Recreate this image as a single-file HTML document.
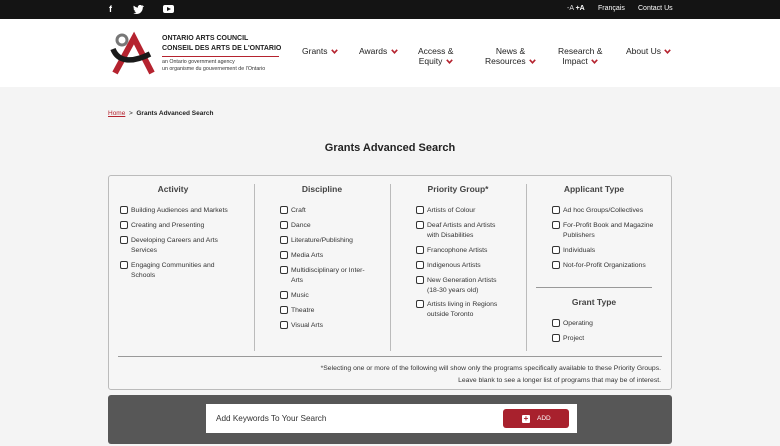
<!DOCTYPE html>
<html><head><meta charset="utf-8"><style>
*{margin:0;padding:0;box-sizing:border-box}
body{width:780px;height:446px;overflow:hidden;background:#f4f4f4;font-family:"Liberation Sans",Arial,sans-serif;position:relative;color:#333}
.a{position:absolute;white-space:nowrap}
.top{position:absolute;left:0;top:0;width:780px;height:19px;background:#141414}
.hdr{position:absolute;left:0;top:19px;width:780px;height:68px;background:#fff}
.nav{font-size:8.5px;color:#222;text-align:center;line-height:10px}
.chev{display:inline-block;width:7px;height:5px;vertical-align:middle;margin-left:1px}
.cb{position:absolute;width:8px;height:8px;border:1px solid #333;border-radius:2px;background:#fff}
.lb{position:absolute;font-size:6.8px;line-height:9.5px;color:#333;white-space:nowrap}
.h{position:absolute;font-size:8.5px;font-weight:bold;color:#444;text-align:center}
.vl{position:absolute;top:184px;width:1px;height:167px;background:#bbb}
</style></head><body>
<div class="top"></div>
<div class="a" style="left:109px;top:4px;color:#fff;font-size:9px;font-weight:bold">f</div>
<svg class="a" style="left:133px;top:5px" width="11" height="9" viewBox="0 0 24 20"><path d="M23 2c-1 .5-2 .7-3 .9 1-.6 2-1.6 2.3-2.7-1 .6-2 1-3.2 1.2A5 5 0 0 0 10.6 6 14 14 0 0 1 1.6 1.5a5 5 0 0 0 1.5 6.6c-.8 0-1.6-.3-2.200-.6 0 2.4 1.7 4.4 4 4.9-.7.2-1.5.2-2.2.1.6 2 2.5 3.4 4.6 3.4A10 10 0 0 1 0 17.9 14 14 0 0 0 7.5 20c9 0 14-7.5 14-14v-.6c1-.7 1.8-1.6 2.5-2.5z" fill="#fff"/></svg>
<div class="a" style="left:163px;top:5px;width:11px;height:8px;background:#fff;border-radius:2px"></div>
<div class="a" style="left:167px;top:7px;width:0;height:0;border-left:4px solid #141414;border-top:2px solid transparent;border-bottom:2px solid transparent"></div>
<div class="a" style="left:567px;top:5px;color:#ddd;font-size:7px">-A <b style="color:#fff">+A</b></div>
<div class="a" style="left:598px;top:5px;color:#fff;font-size:7px">Français</div>
<div class="a" style="left:638px;top:5px;color:#fff;font-size:7px">Contact Us</div>
<div class="hdr"></div>
<svg class="a" style="left:108px;top:28px" width="50" height="50" viewBox="0 0 50 50">
<circle cx="14" cy="12" r="5" fill="none" stroke="#777" stroke-width="3"/>
<path d="M7 45 L26 10 L44 45" fill="none" stroke="#b5232f" stroke-width="6"/>
<path d="M5 21 C10 34 24 35 42 26" fill="none" stroke="#1a1a1a" stroke-width="5.5"/>
</svg>
<div class="a" style="left:162px;top:34px;font-size:7px;font-weight:bold;color:#222;line-height:10px">ONTARIO ARTS COUNCIL<br>CONSEIL DES ARTS DE L'ONTARIO</div>
<div class="a" style="left:162px;top:56px;width:117px;height:1px;background:#b5232f"></div>
<div class="a" style="left:162px;top:59px;font-size:5.3px;color:#333;line-height:7px">an Ontario government agency<br>un organisme du gouvernement de l'Ontario</div>
<svg width="0" height="0" style="position:absolute"><defs><symbol id="cv" viewBox="0 0 7 5"><path d="M0.8 0.8 L3.5 3.8 L6.2 0.8" fill="none" stroke="#b5232f" stroke-width="1.6"/></symbol></defs></svg>
<div class="a nav" style="left:302px;top:46px">Grants <svg class="chev"><use href="#cv"/></svg></div>
<div class="a nav" style="left:359px;top:46px">Awards <svg class="chev"><use href="#cv"/></svg></div>
<div class="a nav" style="left:418px;top:46px">Access &amp;<br>Equity <svg class="chev"><use href="#cv"/></svg></div>
<div class="a nav" style="left:485px;top:46px">News &amp;<br>Resources <svg class="chev"><use href="#cv"/></svg></div>
<div class="a nav" style="left:558px;top:46px">Research &amp;<br>Impact <svg class="chev"><use href="#cv"/></svg></div>
<div class="a nav" style="left:626px;top:46px">About Us <svg class="chev"><use href="#cv"/></svg></div>
<div class="a" style="left:108px;top:110px;font-size:6.5px;color:#222"><span style="color:#b5232f;text-decoration:underline">Home</span> &nbsp;&gt;&nbsp; <b>Grants Advanced Search</b></div>
<div class="a" style="left:0;width:780px;top:142px;text-align:center;font-size:11px;font-weight:bold;color:#222">Grants Advanced Search</div>
<div class="a" style="left:108px;top:175px;width:564px;height:215px;border:1px solid #bbb;border-radius:3px;background:#f6f6f6"></div>
<div class="vl" style="left:254px"></div><div class="vl" style="left:390px"></div><div class="vl" style="left:526px"></div>
<div class="a" style="left:118px;top:356px;width:544px;height:1px;background:#999"></div>
<div class="a" style="left:536px;top:287px;width:116px;height:1px;background:#999"></div>
<div class="h" style="left:118px;width:110px;top:184px">Activity</div>
<div class="h" style="left:264px;width:116px;top:184px">Discipline</div>
<div class="h" style="left:400px;width:116px;top:184px">Priority Group*</div>
<div class="h" style="left:536px;width:116px;top:184px">Applicant Type</div>
<div class="h" style="left:536px;width:116px;top:297px">Grant Type</div>
<div class="cb" style="left:120px;top:206px"></div><div class="lb" style="left:131px;top:206px">Building Audiences and Markets</div>
<div class="cb" style="left:120px;top:221px"></div><div class="lb" style="left:131px;top:221px">Creating and Presenting</div>
<div class="cb" style="left:120px;top:236px"></div><div class="lb" style="left:131px;top:236px">Developing Careers and Arts<br>Services</div>
<div class="cb" style="left:120px;top:261px"></div><div class="lb" style="left:131px;top:261px">Engaging Communities and<br>Schools</div>
<div class="cb" style="left:280px;top:206px"></div><div class="lb" style="left:291px;top:206px">Craft</div>
<div class="cb" style="left:280px;top:221px"></div><div class="lb" style="left:291px;top:221px">Dance</div>
<div class="cb" style="left:280px;top:236px"></div><div class="lb" style="left:291px;top:236px">Literature/Publishing</div>
<div class="cb" style="left:280px;top:251px"></div><div class="lb" style="left:291px;top:251px">Media Arts</div>
<div class="cb" style="left:280px;top:266px"></div><div class="lb" style="left:291px;top:266px">Multidisciplinary or Inter-<br>Arts</div>
<div class="cb" style="left:280px;top:291px"></div><div class="lb" style="left:291px;top:291px">Music</div>
<div class="cb" style="left:280px;top:306px"></div><div class="lb" style="left:291px;top:306px">Theatre</div>
<div class="cb" style="left:280px;top:321px"></div><div class="lb" style="left:291px;top:321px">Visual Arts</div>
<div class="cb" style="left:416px;top:206px"></div><div class="lb" style="left:427px;top:206px">Artists of Colour</div>
<div class="cb" style="left:416px;top:221px"></div><div class="lb" style="left:427px;top:221px">Deaf Artists and Artists<br>with Disabilities</div>
<div class="cb" style="left:416px;top:246px"></div><div class="lb" style="left:427px;top:246px">Francophone Artists</div>
<div class="cb" style="left:416px;top:261px"></div><div class="lb" style="left:427px;top:261px">Indigenous Artists</div>
<div class="cb" style="left:416px;top:276px"></div><div class="lb" style="left:427px;top:276px">New Generation Artists<br>(18-30 years old)</div>
<div class="cb" style="left:416px;top:300px"></div><div class="lb" style="left:427px;top:300px">Artists living in Regions<br>outside Toronto</div>
<div class="cb" style="left:552px;top:206px"></div><div class="lb" style="left:563px;top:206px">Ad hoc Groups/Collectives</div>
<div class="cb" style="left:552px;top:221px"></div><div class="lb" style="left:563px;top:221px">For-Profit Book and Magazine<br>Publishers</div>
<div class="cb" style="left:552px;top:246px"></div><div class="lb" style="left:563px;top:246px">Individuals</div>
<div class="cb" style="left:552px;top:261px"></div><div class="lb" style="left:563px;top:261px">Not-for-Profit Organizations</div>
<div class="cb" style="left:552px;top:319px"></div><div class="lb" style="left:563px;top:319px">Operating</div>
<div class="cb" style="left:552px;top:334px"></div><div class="lb" style="left:563px;top:334px">Project</div>
<div class="a" style="right:119px;top:363px;font-size:6.8px;color:#333;text-align:right;line-height:12px">*Selecting one or more of the following will show only the programs specifically available to these Priority Groups.<br>Leave blank to see a longer list of programs that may be of interest.</div>
<div class="a" style="left:108px;top:395px;width:564px;height:49px;background:#575757;border-radius:3px"></div>
<div class="a" style="left:206px;top:404px;width:371px;height:29px;background:#fff"></div>
<div class="a" style="left:216px;top:414px;font-size:8.2px;color:#333">Add Keywords To Your Search</div>
<div class="a" style="left:503px;top:409px;width:66px;height:19px;background:#a8212d;border-radius:3px"></div>
<div class="a" style="left:522px;top:415px;width:8px;height:8px;background:#fff;border-radius:1px;color:#a8212d;font-size:8px;line-height:8px;text-align:center;font-weight:bold">+</div>
<div class="a" style="left:537px;top:415px;font-size:6.5px;color:#fff">ADD</div>
</body></html>
